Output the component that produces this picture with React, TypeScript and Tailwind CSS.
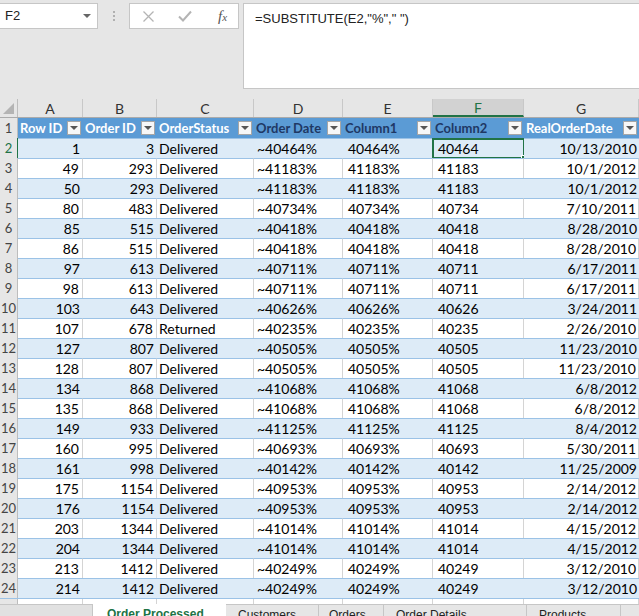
import React from "react";

type Row = [number, number, string, string, string, string, string];

const rows: Row[] = [
  [1, 3, "Delivered", "~40464%", "40464%", "40464", "10/13/2010"],
  [49, 293, "Delivered", "~41183%", "41183%", "41183", "10/1/2012"],
  [50, 293, "Delivered", "~41183%", "41183%", "41183", "10/1/2012"],
  [80, 483, "Delivered", "~40734%", "40734%", "40734", "7/10/2011"],
  [85, 515, "Delivered", "~40418%", "40418%", "40418", "8/28/2010"],
  [86, 515, "Delivered", "~40418%", "40418%", "40418", "8/28/2010"],
  [97, 613, "Delivered", "~40711%", "40711%", "40711", "6/17/2011"],
  [98, 613, "Delivered", "~40711%", "40711%", "40711", "6/17/2011"],
  [103, 643, "Delivered", "~40626%", "40626%", "40626", "3/24/2011"],
  [107, 678, "Returned", "~40235%", "40235%", "40235", "2/26/2010"],
  [127, 807, "Delivered", "~40505%", "40505%", "40505", "11/23/2010"],
  [128, 807, "Delivered", "~40505%", "40505%", "40505", "11/23/2010"],
  [134, 868, "Delivered", "~41068%", "41068%", "41068", "6/8/2012"],
  [135, 868, "Delivered", "~41068%", "41068%", "41068", "6/8/2012"],
  [149, 933, "Delivered", "~41125%", "41125%", "41125", "8/4/2012"],
  [160, 995, "Delivered", "~40693%", "40693%", "40693", "5/30/2011"],
  [161, 998, "Delivered", "~40142%", "40142%", "40142", "11/25/2009"],
  [175, 1154, "Delivered", "~40953%", "40953%", "40953", "2/14/2012"],
  [176, 1154, "Delivered", "~40953%", "40953%", "40953", "2/14/2012"],
  [203, 1344, "Delivered", "~41014%", "41014%", "41014", "4/15/2012"],
  [204, 1344, "Delivered", "~41014%", "41014%", "41014", "4/15/2012"],
  [213, 1412, "Delivered", "~40249%", "40249%", "40249", "3/12/2010"],
  [214, 1412, "Delivered", "~40249%", "40249%", "40249", "3/12/2010"],
];

const letters = ["A", "B", "C", "D", "E", "F", "G"];
const colW = ["w-[65px]", "w-[74px]", "w-[97px]", "w-[89px]", "w-[90px]", "w-[91px]", "w-[115px]"];
const align = ["justify-end pr-[3px]", "justify-end pr-[3px]", "pl-[2px]", "pl-[3px]", "pl-[5px]", "pl-[5px]", "justify-end pr-[2px]"];
const headers = ["Row ID", "Order ID", "OrderStatus", "Order Date", "Column1", "Column2", "RealOrderDate"];
// D, E and F headers are drawn in dark navy in the sheet
const headerDark = [false, false, false, true, true, true, false];

const FilterButton = () => (
  <div className="absolute right-[2px] top-[3px] w-[14px] h-[14px] bg-[#f7f7f7] border border-[#a6a6a6] flex items-center justify-center">
    <div className="w-0 h-0 border-l-[4px] border-r-[4px] border-t-[4px] border-l-transparent border-r-transparent border-t-[#555]" />
  </div>
);

const RowHead = ({ n, active }: { n: number; active?: boolean }) => (
  <div
    className={`w-[18px] shrink-0 flex items-center justify-center text-[13px] border-r ${
      active ? "border-[#217346] text-[#217346]" : "border-[#bdbdbd] text-[#444]"
    } bg-[#e6e6e6]`}
  >
    {n}
  </div>
);

export default function App() {
  return (
    <div className="w-[639px] h-[616px] overflow-hidden bg-[#e6e6e6] flex flex-col font-['Lato',sans-serif] text-[14px] text-black">
      {/* formula bar */}
      <div className="h-[99px] shrink-0 flex items-start pt-[3px] font-['Liberation_Sans',sans-serif]">
        <div className="w-[98px] h-[26px] bg-white border border-l-0 border-[#c6c6c6] flex items-center justify-between pl-[5px] pr-[6px] text-[13px] text-[#222]">
          <span>F2</span>
          <div className="w-0 h-0 border-l-[4px] border-r-[4px] border-t-[4px] border-l-transparent border-r-transparent border-t-[#666]" />
        </div>
        <div className="w-[31px] h-[26px] flex flex-col items-center justify-center gap-[2px]">
          <div className="w-[2px] h-[2px] bg-[#b0b0b0]" />
          <div className="w-[2px] h-[2px] bg-[#b0b0b0]" />
          <div className="w-[2px] h-[2px] bg-[#b0b0b0]" />
        </div>
        <div className="w-[110px] h-[26px] bg-white border border-[#c6c6c6] flex items-center pl-[12px] gap-[23px]">
          <svg width="13" height="13" viewBox="0 0 13 13">
            <path d="M1.5 1.5 L11.5 11.5 M11.5 1.5 L1.5 11.5" stroke="#b4b4b4" strokeWidth="1.3" fill="none" />
          </svg>
          <svg width="14" height="12" viewBox="0 0 14 12">
            <path d="M1 6.5 L5 10.5 L13 1.5" stroke="#b4b4b4" strokeWidth="2" fill="none" />
          </svg>
          <span className="font-['Liberation_Serif',serif] italic text-[15px] text-[#555] leading-none ml-[3px]">
            f<span className="text-[11px]">x</span>
          </span>
        </div>
        <div className="ml-[4px] flex-1 h-[86px] bg-white border border-r-0 border-[#c6c6c6] pl-[11px] pt-[5px] text-[13px] text-[#222]">
          =SUBSTITUTE(E2,"%"," ")
        </div>
      </div>

      {/* column headers */}
      <div className="h-[19px] shrink-0 flex border-b border-[#ababab] bg-[#e6e6e6]">
        <div className="w-[18px] shrink-0 border-r border-[#bdbdbd] flex items-end justify-end p-[3px]">
          <svg width="11" height="11" viewBox="0 0 11 11">
            <path d="M11 0 L11 11 L0 11 Z" fill="#b4b4b4" />
          </svg>
        </div>
        {letters.map((l, i) => (
          <div
            key={l}
            className={`${colW[i]} shrink-0 flex items-center justify-center border-r border-[#c8c8c8] ${
              l === "F" ? "bg-[#d2d2d2] text-[#217346] border-b-2 border-b-[#217346]" : "text-[#333]"
            }`}
          >
            {l}
          </div>
        ))}
      </div>

      {/* sheet */}
      <div className="flex-1 overflow-hidden bg-white">
        {/* table header row */}
        <div className="h-[20px] flex leading-none">
          <RowHead n={1} />
          {headers.map((h, i) => (
            <div
              key={h}
              className={`${colW[i]} shrink-0 relative bg-[#5b9bd5] flex items-center pl-[2px] font-bold text-[13px] ${
                headerDark[i] ? "text-[#1f3864]" : "text-white"
              }`}
            >
              {h}
              <FilterButton />
            </div>
          ))}
        </div>
        {rows.map((r, ri) => {
          const band = ri % 2 === 0;
          return (
            <div key={ri} className="h-[20px] flex leading-none">
              <RowHead n={ri + 2} active={ri === 0} />
              {r.map((v, ci) => (
                <div
                  key={ci}
                  className={`${colW[ci]} shrink-0 relative flex items-center border-t border-[#9bc2e6] ${align[ci]} ${
                    band ? "bg-[#ddebf7]" : "bg-white border-r border-r-[#d4d4d4]"
                  }`}
                >
                  {v}
                  {ri === 0 && ci === 5 && (
                    <>
                      <div className="absolute -left-[1px] -top-[1px] -right-[1px] -bottom-[1px] border-2 border-[#217346]" />
                      <div className="absolute -right-[3px] -bottom-[3px] w-[6px] h-[6px] bg-[#217346] border border-white" />
                    </>
                  )}
                </div>
              ))}
            </div>
          );
        })}
        <div className="h-[20px] flex border-t border-[#9bc2e6]">
          <div className="w-[18px] shrink-0 bg-[#e6e6e6] border-r border-[#bdbdbd]" />
          {colW.map((w, i) => (
            <div key={i} className={`${w} shrink-0 border-r border-[#d4d4d4]`} />
          ))}
        </div>
      </div>

      {/* sheet tabs */}
      <div className="h-[12px] shrink-0 flex overflow-hidden text-[12px] leading-none font-['Liberation_Sans',sans-serif]">
        <div className="w-[93px] shrink-0 bg-[#e1e1e1] border-t border-r border-[#c6c6c6]" />
        <div className="w-[133px] shrink-0 bg-white pl-[14px] pt-[4px] text-[#217346] font-bold overflow-hidden whitespace-nowrap">
          Order Processed
        </div>
        <div className="flex-1 flex bg-[#e6e6e6] border-t border-[#c6c6c6] text-[#222]">
          <div className="w-[93px] shrink-0 border-r border-[#c6c6c6] pl-[12px] pt-[4px] overflow-hidden whitespace-nowrap">Customers</div>
          <div className="w-[65px] shrink-0 border-r border-[#c6c6c6] pl-[10px] pt-[4px] overflow-hidden whitespace-nowrap">Orders</div>
          <div className="w-[143px] shrink-0 border-r border-[#c6c6c6] pl-[12px] pt-[4px] overflow-hidden whitespace-nowrap">Order Details</div>
          <div className="w-[94px] shrink-0 border-r border-[#c6c6c6] pl-[12px] pt-[4px] overflow-hidden whitespace-nowrap">Products</div>
        </div>
      </div>
    </div>
  );
}
